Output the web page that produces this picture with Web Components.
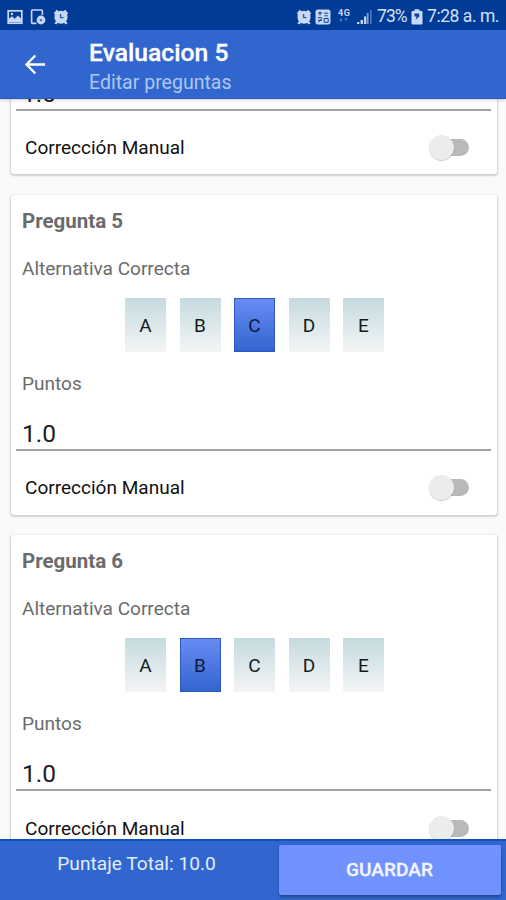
<!DOCTYPE html>
<html lang="es">
<head>
<meta charset="utf-8">
<title>Evaluacion 5</title>
<style>
html,body{margin:0;height:100%}
body{font-family:Roboto,"Liberation Sans",sans-serif;background:#fafafa;overflow:hidden}
</style>
</head>
<body>
<exam-app></exam-app>
<script>
const define=(name,html)=>customElements.define(name,class extends HTMLElement{
  connectedCallback(){
    if(this.shadowRoot)return;
    const t=document.createElement('template');
    t.innerHTML=typeof html==='function'?html(this):html;
    this.attachShadow({mode:'open'}).append(t.content.cloneNode(true));
  }
});
const alarm=`<svg width="16" height="16" viewBox="0 0 16 16"><g fill="#c9d9f5"><circle cx="8" cy="8.2" r="6.5"/><path d="M.8 4.2 3.8 .8l2 1.8-3.4 3.4zM15.2 4.2 12.2 .8l-2 1.8 3.4 3.4zM1.4 14.2l2.5-3 2 1.6L3.2 15.6zM14.6 14.2l-2.5-3-2 1.6 2.7 2.8z"/></g><path d="M7.6 5v3.6h3" fill="none" stroke="#2b5cb0" stroke-width="1.4"/></svg>`;

define('status-bar',`<style>
:host{display:flex;height:30px;flex:none;box-sizing:border-box;background:#003c97;color:#d3e0f7;padding:3px 8px 0 7px;align-items:center;justify-content:space-between;font-size:18px}
div{display:flex;align-items:center}
svg{display:block;flex:none}
.l{gap:7px}
.t{white-space:nowrap;line-height:27px}
.pct{margin-left:5px;width:30px;font-size:17.5px;letter-spacing:-.9px}
.time{margin-left:4px;width:71px;font-size:17.5px;letter-spacing:-.45px}
</style>
<div class="l">
<svg width="16" height="16" viewBox="0 0 16 16"><rect x="1.2" y="1.8" width="13.6" height="12.4" fill="none" stroke="#c9d9f5" stroke-width="1.7"/><path d="M2 13V9.8l3-2.6 2.6 2.5L11 6.6l3 3V13z" fill="#c9d9f5"/><circle cx="5" cy="5" r="1.2" fill="#c9d9f5"/></svg>
<svg width="16" height="16" viewBox="0 0 16 16"><path d="M6.5 14.4H2.6a1 1 0 0 1-1-1V2a1 1 0 0 1 1-1h8.8a1 1 0 0 1 1 1v4" fill="none" stroke="#c9d9f5" stroke-width="1.6"/><circle cx="11" cy="11" r="4.4" fill="#c9d9f5"/><path d="M9.4 10.4h3.2L11 12.4z" fill="#0a3f99"/></svg>
${alarm}
</div>
<div class="r">
${alarm}
<svg style="margin-left:3px" width="16" height="16" viewBox="0 0 16 16"><rect x=".5" y=".5" width="15" height="15" rx="2.5" fill="#c9d9f5"/><path d="M3 4h4M5 2.5v4M9 4.2h4.2M9.5 6.8h3.4M3 8.7h4M3 11.3h4M3.4 13.4 7 9.5M9.2 9.5h4v3.8h-4z" fill="none" stroke="#0a3f99" stroke-width="1"/></svg>
<svg style="margin-left:7px" width="13" height="17" viewBox="0 0 13 17"><text x="0" y="7.5" font-size="9" font-weight="700" fill="#c9d9f5" textLength="12">4G</text><path d="M3 10v3M1.8 11.5 3 13.2l1.2-1.7M8 13.2v-3M6.8 11.7 8 10l1.2 1.7" stroke="#5f8acb" fill="none" stroke-width=".9"/></svg>
<svg style="margin-left:6px" width="15" height="16" viewBox="0 0 15 16"><path d="M0 15v-2h2.4v2zM3.6 15v-4H6v4zM7 15V7.5h2.3V15z" fill="#c9d9f5"/><path d="M9.8 15V4h1.8v11zM13.4 15V1h1v14z" fill="#7d9fd7"/></svg>
<span class="t pct">73%</span>
<svg style="margin-left:4px" width="12" height="16" viewBox="0 0 12 16"><path d="M3.5 2V.3h5V2h2a1 1 0 0 1 1 1v11.5a1 1 0 0 1-1 1h-9a1 1 0 0 1-1-1V3a1 1 0 0 1 1-1z" fill="#c9d9f5"/><path d="M3.5 4.6h4.7v2.9L4.6 10.8l1-3.3H3.5z" fill="#0a3f99"/></svg>
<span class="t time">7:28 a. m.</span>
</div>`);

define('app-bar',`<style>
:host{display:flex;height:69px;flex:none;background:#3166cf;box-sizing:border-box;border-bottom:1px solid #2559bd;color:#fff;padding-left:24px;position:relative;z-index:1;box-shadow:0 1px 3px #0003}
svg{margin:23px 42px 0 0;flex:none}
.h{padding-top:8px}
h1{margin:0;font-size:24.7px;line-height:30px;font-weight:500;-webkit-text-stroke:.3px #fff}
p{margin:3px 0 0;font-size:19.55px;line-height:24px;color:#adc6f2}
</style>
<svg width="23" height="23" viewBox="0 0 23 23"><path d="M21 11.5H3M11.3 2.5 2.5 11.5l8.8 9" fill="none" stroke="#fff" stroke-width="2.3"/></svg>
<div class="h"><h1><slot name="title"></slot></h1><p><slot name="sub"></slot></p></div>`);

define('toggle-switch',`<style>
:host{display:flex;width:40px;height:26px;align-items:center}
i{display:block}
.k{width:25px;height:25px;border-radius:50%;background:#ececec;box-shadow:0 1px 1px #0003;flex:none;z-index:1}
.t{width:27px;height:17px;border-radius:0 9px 9px 0;background:#b9b9b9;margin-left:-12px}
</style><i class="k"></i><i class="t"></i>`);

define('answer-option',`<style>
:host{display:flex;width:41px;height:54px;align-items:center;justify-content:center;font-size:19px;color:#151b1d;background:linear-gradient(#c5dadf,#f3f5f5)}
:host([selected]){background:linear-gradient(#6a8cf6,#3264cd);box-shadow:inset 0 0 0 1px #2d58c2;color:#0c1a3c}
span{padding-top:1px}
</style><span><slot></slot></span>`);

define('question-card',el=>{
const partial=el.hasAttribute('partial');
return `<style>
:host{display:flex;flex-direction:column;box-sizing:border-box;height:319.6px;background:#fff;border-radius:3px;box-shadow:0 1px 2px 1px #0000002b;padding:13px 6px 0 5px;color:#6b6b6b;flex:none}
:host([partial]){height:97.8px;padding-top:0}
:host([partial]) .val{margin-top:0}
h2{margin:0 6px;font-size:20.5px;line-height:26px;font-weight:700}
.label{margin:22px 6px 0;font-size:19.05px;line-height:26px}
.opts{display:flex;gap:13.5px;margin:16px 0 0 109px}
.label.pts{margin-top:19px}
.val{margin-top:20px;padding:0 6px;line-height:34px;font-size:24.5px;color:#202020;border-bottom:2px solid #a2a2a2;box-sizing:border-box;height:34px}
.row{display:flex;align-items:center;justify-content:space-between;margin:24px 22px 0 9px;height:26px;font-size:19.05px;color:#111}
</style>
${partial?'':`<h2><slot></slot></h2>
<div class="label">Alternativa Correcta</div>
<div class="opts">${[...'ABCDE'].map(c=>`<answer-option${c===el.getAttribute('answer')?' selected':''}>${c}</answer-option>`).join('')}</div>
<div class="label pts">Puntos</div>`}
<div class="val">1.0</div>
<div class="row"><span>Corrección Manual</span><toggle-switch></toggle-switch></div>`});

define('bottom-bar',`<style>
:host{display:flex;height:61px;flex:none;box-sizing:border-box;background:#3166cf;border-top:2px solid #0d54bd;color:#e3edff;position:relative;z-index:1}
.total{width:273px;box-sizing:border-box;padding:10px 0 0;text-align:center;font-size:19.15px;line-height:26px}
button{all:unset;box-sizing:border-box;width:222px;height:50px;margin:4px 0 0 5.5px;background:#7092ff;text-align:center;font-size:19.1px;font-weight:500;line-height:50px;border-radius:2px;box-shadow:0 2px 3px #0005;color:#f3f6ff;-webkit-text-stroke:.3px #f3f6ff}
</style>
<div class="total"><slot></slot></div><button>GUARDAR</button>`);

define('exam-app',`<style>
:host{display:flex;flex-direction:column;height:900px;width:506px;overflow:hidden;background:#fafafa}
main{flex:1;min-height:0;overflow:hidden}
.list{display:flex;flex-direction:column;gap:20.7px;margin:-22.5px 9.5px 0 11px}
</style>
<status-bar></status-bar>
<app-bar><span slot="title">Evaluacion 5</span><span slot="sub">Editar preguntas</span></app-bar>
<main><div class="list">
<question-card partial></question-card>
<question-card answer="C">Pregunta 5</question-card>
<question-card answer="B">Pregunta 6</question-card>
</div></main>
<bottom-bar>Puntaje Total: 10.0</bottom-bar>`);
</script>
</body>
</html>
